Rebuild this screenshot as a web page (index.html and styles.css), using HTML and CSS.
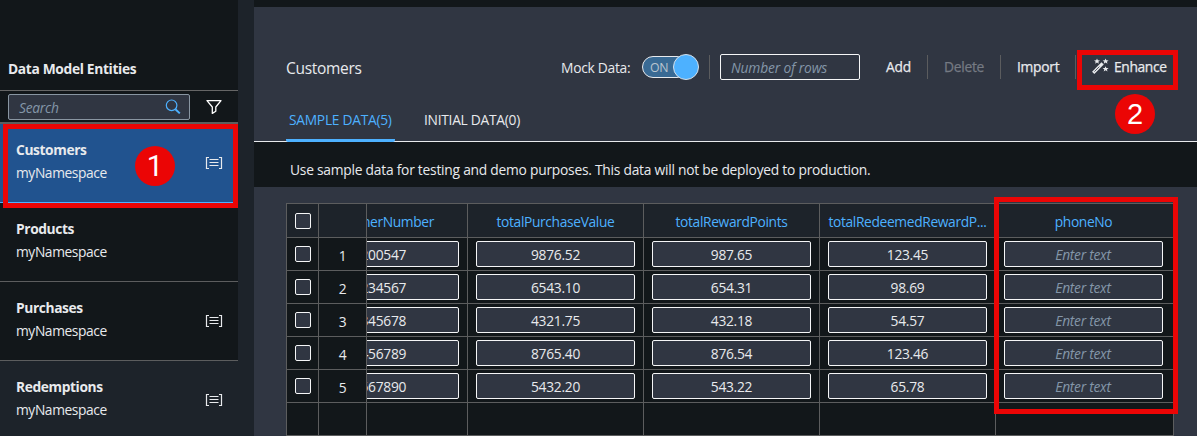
FILE: index.html
```html
<!DOCTYPE html>
<html lang="en">
<head>
<meta charset="utf-8">
<title>Sample Data Editor</title>
<link rel="stylesheet" href="styles.css">
</head>
<body>
<svg class="defs" width="0" height="0">
  <symbol id="entity" viewBox="0 0 18 14"><path d="M4 1.5H1.5V12.5H4M14 1.5H16.5V12.5H14" fill="none" stroke="currentColor" stroke-width="1.2"/><path d="M4.5 3.5H13.5M4.5 6.5H13.5M4.5 9.5H13.5" fill="none" stroke="currentColor" stroke-width="1"/></symbol>
</svg>
<div class="app">
  <aside class="sidebar">
    <h2 class="side-title"><span>Data Model Entities</span></h2>
    <div class="search-row">
      <div class="search"><span>Search</span>
        <svg width="16" height="16" viewBox="0 0 16 16"><circle cx="6.6" cy="6.3" r="5.3" fill="none" stroke="currentColor" stroke-width="1.2"/><path d="M10.4 10.2L14.8 14.4" stroke="currentColor" stroke-width="2"/></svg>
      </div>
      <svg class="filter" width="16" height="16" viewBox="0 0 16 16"><path d="M1 1.6H15L9.8 8V12.3L6.3 14.4V8Z" fill="none" stroke="currentColor" stroke-width="1.3" stroke-linejoin="round"/></svg>
    </div>
    <ul class="entities">
      <li class="entity selected"><div><b>Customers</b><span>myNamespace</span></div><svg width="18" height="14"><use href="#entity"/></svg></li>
      <li class="entity"><div><b>Products</b><span>myNamespace</span></div></li>
      <li class="entity"><div><b>Purchases</b><span>myNamespace</span></div><svg width="18" height="14"><use href="#entity"/></svg></li>
      <li class="entity hovered"><div><b>Redemptions</b><span>myNamespace</span></div><svg width="18" height="14"><use href="#entity"/></svg></li>
    </ul>
  </aside>
  <main class="main">
    <header class="toolbar">
      <h1>Customers</h1>
      <span class="mock">Mock Data:</span>
      <div class="switch"><div class="track">ON</div><div class="knob"></div></div>
      <i class="sep sep-a"></i>
      <div class="rows-input">Number of rows</div>
      <span class="btn add">Add</span>
      <i class="sep sep-b"></i>
      <span class="btn delete">Delete</span>
      <i class="sep sep-c"></i>
      <span class="btn import">Import</span>
      <i class="sep sep-d"></i>
      <svg class="wand" width="17" height="16" viewBox="0 0 17 16"><path d="M1.2 14.8L10.6 5.4" stroke="currentColor" stroke-width="3.2"/><path d="M2.4 13.6L7.4 8.6" stroke="#303642" stroke-width=".8"/><g fill="currentColor"><path id="star" d="M5 .5L5.8 2.3L8 2.4L6.3 3.7L6.9 5.8L5 4.6L3.1 5.8L3.7 3.7L2 2.4L4.2 2.3Z"/><use href="#star" x="8.6" y="0"/><use href="#star" x="8.6" y="7.7"/></g></svg>
      <span class="btn enhance">Enhance</span>
    </header>
    <nav class="tabs"><div class="tab active">SAMPLE DATA(5)</div><div class="tab initial">INITIAL DATA(0)</div></nav>
    <div class="message"><span>Use sample data for testing and demo purposes. This data will not be deployed to production.</span></div>
    <div class="grid">
      <div class="row head"><div><i class="check"></i></div><div></div><div class="clip"><span>customerNumber</span></div><div><span>totalPurchaseValue</span></div><div><span>totalRewardPoints</span></div><div><span>totalRedeemedRewardP...</span></div><div><span>phoneNo</span></div></div>
      <div class="row"><div><i class="check"></i></div><div class="num">1</div><div class="clip"><p>1200547</p></div><div><p>9876.52</p></div><div><p>987.65</p></div><div><p>123.45</p></div><div><p class="empty">Enter text</p></div></div>
      <div class="row"><div><i class="check"></i></div><div class="num">2</div><div class="clip"><p>1234567</p></div><div><p>6543.10</p></div><div><p>654.31</p></div><div><p>98.69</p></div><div><p class="empty">Enter text</p></div></div>
      <div class="row"><div><i class="check"></i></div><div class="num">3</div><div class="clip"><p>2345678</p></div><div><p>4321.75</p></div><div><p>432.18</p></div><div><p>54.57</p></div><div><p class="empty">Enter text</p></div></div>
      <div class="row"><div><i class="check"></i></div><div class="num">4</div><div class="clip"><p>3456789</p></div><div><p>8765.40</p></div><div><p>876.54</p></div><div><p>123.46</p></div><div><p class="empty">Enter text</p></div></div>
      <div class="row"><div><i class="check"></i></div><div class="num">5</div><div class="clip"><p>4567890</p></div><div><p>5432.20</p></div><div><p>543.22</p></div><div><p>65.78</p></div><div><p class="empty">Enter text</p></div></div>
      <div class="row"><div></div><div></div><div></div><div></div><div></div><div></div><div></div></div>
    </div>
  </main>
  <div class="mark mark-entity"></div>
  <div class="mark mark-enhance"></div>
  <div class="mark mark-phone"></div>
  <div class="step step-one">1</div>
  <div class="step step-two">2</div>
</div>
</body>
</html>
```
FILE: styles.css
```css
* { box-sizing: border-box; }
body { margin: 0; font-family: "Open Sans", "Noto Sans", sans-serif; font-size: 13.8px; letter-spacing: -.27px; color: #e8eaed; }
h1, h2, p, ul { margin: 0; padding: 0; font-weight: 400; }
.defs { position: absolute; }
.app { position: relative; display: flex; width: 1197px; height: 436px; overflow: hidden; background: #1d232a; }
.sidebar { width: 238px; height: 436px; background: #12171a; }
.side-title { height: 91px; padding: 59px 0 0 8px; border-bottom: 1px solid #666; font-size: 13.8px; font-weight: 700; line-height: 20px; letter-spacing: -.35px; white-space: nowrap; }
.search-row { display: flex; align-items: flex-start; height: 33px; padding: 3px 0 0 8px; border-bottom: 2px solid #5c5d5e; }
.search { display: flex; justify-content: space-between; align-items: center; width: 182px; height: 26px; padding: 0 8px 0 10px; border: 1px solid #8996a2; border-radius: 2px; background: #303642; color: #8496a9; font-style: italic; }
.search svg { color: #4db1ff; }
.filter { margin: 5px 0 0 16px; color: #fff; }
.entities { list-style: none; }
.entity { display: flex; justify-content: space-between; height: 79px; padding: 16px 15px 0 16px; border-bottom: 1px solid #5c5d5e; }
.entity div { display: flex; flex-direction: column; }
.entity b, .entity span { height: 23px; line-height: 20px; }
.entity b { font-size: 13.8px; letter-spacing: -.4px; }
.entity span { letter-spacing: -.4px; }
.entity svg { margin-top: 16px; }
.selected { background: #21538f; border-color: #4db1ff; }
.hovered { background: #1d232a; }
.main { width: 943px; height: 436px; margin-left: 16px; border-top: 7px solid #12171a; background: #303642; }
.toolbar { display: flex; align-items: flex-start; height: 92px; padding: 47px 0 0 32px; line-height: 26px; white-space: nowrap; }
h1 { width: 275px; font-size: 15.5px; line-height: 29px; letter-spacing: -.3px; }
.mock { width: 81px; line-height: 28px; }
.switch { display: flex; align-items: center; width: 57px; height: 26px; }
.track { width: 46px; height: 22px; padding-left: 7px; border: 1px solid #e8eaed; border-radius: 11px; background: #396a94; color: #b9c5cf; font-size: 12.3px; line-height: 22px; }
.knob { flex: none; width: 26px; height: 26px; margin-left: -15px; border: 1px solid #d5e0ea; border-radius: 50%; background: #4db1ff; }
.sep { width: 1px; height: 24px; margin-top: 1px; background: #5b5c5e; }
.sep-a { margin-left: 10px; }
.rows-input { width: 140px; height: 26px; margin-left: 10px; padding-left: 10px; border: 1px solid #f5f6f7; border-radius: 2px; color: #8496a9; font-style: italic; letter-spacing: -.15px; }
.btn { -webkit-text-stroke: .25px currentColor; }
.add { width: 41px; margin-left: 26px; }
.delete { width: 56px; margin-left: 16px; color: #757a83; }
.import { width: 58px; margin-left: 16px; }
.wand { margin: 4px 0 0 16px; }
.enhance { margin-left: 5px; letter-spacing: -.35px; }
.tabs { display: flex; height: 43px; border-bottom: 1px solid #e8eaed; padding-left: 32px; line-height: 41px; white-space: nowrap; }
.tab { height: 43px; padding-left: 3px; letter-spacing: -.28px; }
.active { width: 109px; border-bottom: 3px solid #4db1ff; border-radius: 2px; color: #4db1ff; }
.initial { margin-left: 26px; }
.message { height: 45px; padding: 18px 0 0 36px; background: #12171a; line-height: 20px; letter-spacing: -.24px; white-space: nowrap; }
.grid { width: 888px; margin: 16px 0 0 32px; border: solid #5c5d5e; border-width: 1px 0 0 1px; background: #12171a; }
.row { display: grid; grid-template-columns: 32px 48px 101px 176px 176px 176px 178px; height: 33px; }
.row > div { display: flex; align-items: center; justify-content: center; overflow: hidden; border: solid #5c5d5e; border-width: 0 1px 1px 0; white-space: nowrap; }
.head { height: 34px; background: #1d232a; color: #4db1ff; }
.head span { padding-top: 1px; letter-spacing: -.36px; }
.row > .clip { justify-content: flex-end; padding-right: 8px; }
.clip span { padding-right: 25px; }
.check { width: 16px; height: 16px; border: 1px solid #f5f6f7; border-radius: 2px; background: #303642; }
.num { padding-top: 3px; }
.row p { flex: none; width: 159px; height: 26px; border: 1px solid #f5f6f7; border-radius: 2px; background: #303642; line-height: 25px; text-align: center; }
.row > div:last-child { padding-right: 2px; }
.row .empty { margin-right: 8px; margin-left: 7px; color: #8496a9; font-style: italic; }
.mark { position: absolute; border: 5px solid #eb0505; }
.mark-entity { left: 3px; top: 124px; width: 235px; height: 84px; }
.mark-enhance { left: 1077px; top: 50px; width: 101px; height: 40px; }
.mark-phone { left: 994px; top: 197px; width: 184px; height: 217px; }
.step { position: absolute; width: 40px; height: 40px; border-radius: 50%; background: #eb0505; color: #fff; font: 29px/40px "Liberation Sans", sans-serif; letter-spacing: 0; text-align: center; }
.step-one { left: 135px; top: 146px; font-family: Roboto, sans-serif; line-height: 41px; }
.step-two { left: 1115px; top: 94px; }
```
